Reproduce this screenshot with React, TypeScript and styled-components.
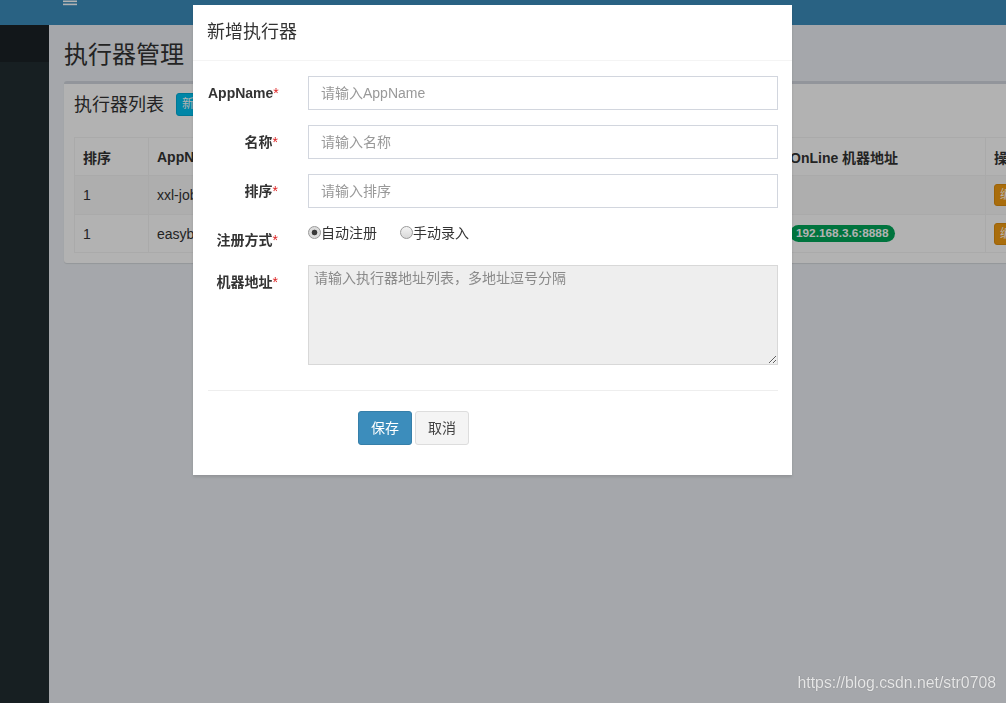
import React from "react";
import styled, { createGlobalStyle } from "styled-components";

const FONT = `"Liberation Sans", "Noto Sans CJK SC", sans-serif`;

const Global = createGlobalStyle`
  html, body { margin: 0; padding: 0; height: 100%; overflow: hidden; }
  body { font-family: ${FONT}; font-size: 14px; color: #333; background: #ecf0f5; }
  * { box-sizing: border-box; }
`;

const Page = styled.div`
  display: flex;
  width: 100%;
  height: 703px;
  overflow: hidden;
`;

const Sidebar = styled.div`
  width: 49px;
  flex: 0 0 49px;
  display: flex;
  flex-direction: column;
  background: #222d32;
`;

const SideLogo = styled.div`
  height: 25px;
  background: #3c8dbc;
`;

const SidePanel = styled.div`
  height: 37px;
  background: #1a2226;
`;

const Main = styled.div`
  flex: 1;
  min-width: 0;
  display: flex;
  flex-direction: column;
  background: #ecf0f5;
`;

const Navbar = styled.div`
  height: 25px;
  background: #3c8dbc;
  padding-left: 14px;
  display: flex;
  align-items: flex-start;
`;

const Content = styled.div`
  padding: 15px 0 0 15px;
  display: flex;
  flex-direction: column;
  gap: 11px;
`;

const PageTitle = styled.h1`
  margin: 0;
  font-size: 24px;
  line-height: 30px;
  font-weight: normal;
  color: #333;
`;

const Box = styled.div`
  width: 1060px;
  background: #fff;
  border-top: 3px solid #d2d6de;
  border-radius: 3px;
  box-shadow: 0 1px 1px rgba(0, 0, 0, 0.1);
`;

const BoxHeader = styled.div`
  height: 43px;
  padding: 9px 10px 0;
  display: flex;
  align-items: flex-start;
  gap: 12px;
`;

const BoxTitle = styled.h3`
  margin: 3px 0 0;
  font-size: 18px;
  line-height: 18px;
  font-weight: normal;
  color: #333;
`;

const InfoBtn = styled.span`
  display: inline-block;
  padding: 1px 5px;
  font-size: 12px;
  line-height: 19px;
  color: #fff;
  background: #00c0ef;
  border: 1px solid #00acd6;
  border-radius: 3px;
`;

const BoxBody = styled.div`
  padding: 10px 10px 10px;
`;

const Row = styled.div<{ $h: number; $bg: string }>`
  display: grid;
  grid-template-columns: 74px 633px 204px 120px;
  height: ${(p) => p.$h}px;
  background: ${(p) => p.$bg};
  border-top: 1px solid #f4f4f4;
  &:last-child { border-bottom: 1px solid #f4f4f4; }
`;

const Cell = styled.div<{ $head?: boolean }>`
  padding: 0 8px;
  display: flex;
  align-items: center;
  border-left: 1px solid #f4f4f4;
  font-weight: ${(p) => (p.$head ? "bold" : "normal")};
  color: #333;
  white-space: nowrap;
  overflow: hidden;
`;

const GreenLabel = styled.span`
  display: inline-block;
  background: #00a65a;
  color: #fff;
  font-weight: bold;
  font-size: 11.8px;
  line-height: 13px;
  padding: 2px 6px 2px 6px;
  border-radius: 9px;
`;

const WarnBtn = styled.span`
  display: inline-block;
  padding: 1px 5px;
  font-size: 12px;
  line-height: 18px;
  color: #fff;
  background: #f39c12;
  border: 1px solid #e08e0b;
  border-radius: 3px;
`;

const Backdrop = styled.div`
  position: fixed;
  inset: 0;
  background: rgba(0, 0, 0, 0.3);
  z-index: 10;
`;

const ModalLayer = styled.div`
  position: fixed;
  inset: 0;
  z-index: 20;
  padding: 5px 0 0 193px;
`;

const Modal = styled.div`
  width: 599px;
  background: #fff;
  box-shadow: 0 2px 3px rgba(0, 0, 0, 0.125);
`;

const ModalHeader = styled.div`
  height: 56px;
  padding: 15px 14px;
  border-bottom: 1px solid #f4f4f4;
`;

const ModalTitle = styled.h4`
  margin: 0;
  font-size: 18px;
  line-height: 25px;
  font-weight: normal;
  color: #333;
`;

const ModalBody = styled.div`
  padding: 15px 14px 15px 15px;
  display: flex;
  flex-direction: column;
`;

const FormRow = styled.div`
  display: grid;
  grid-template-columns: 85px 1fr;
  column-gap: 15px;
  margin-bottom: 15px;
`;

const Label = styled.label`
  text-align: right;
  padding: 7px 15px 0 0;
  font-weight: bold;
  font-size: 14px;
  line-height: 20px;
  color: #333;
  white-space: nowrap;
`;

const Req = styled.span`
  color: #dd2222;
  font-weight: normal;
`;

const Input = styled.input`
  display: block;
  width: 100%;
  height: 34px;
  padding: 6px 12px;
  font-family: ${FONT};
  font-size: 14px;
  line-height: 20px;
  color: #555;
  border: 1px solid #d2d6de;
  border-radius: 0;
  background: #fff;
  outline: none;
  &::placeholder { color: #999; }
`;

const RadioGroup = styled.div`
  display: flex;
  align-items: center;
  height: 20px;
  gap: 23px;
`;

const RadioLabel = styled.label`
  display: flex;
  align-items: center;
  font-size: 14px;
  line-height: 20px;
  color: #333;
`;

const Radio = styled.input`
  appearance: none;
  width: 13px;
  height: 13px;
  margin: 0;
  border: 1px solid #9a9a9a;
  border-radius: 50%;
  background: linear-gradient(#f4f4f4, #d8d8d8);
  position: relative;
  top: -1px;
  &:checked {
    background: radial-gradient(circle, #3a3a3a 0 2.5px, #dcdcdc 3.2px);
  }
`;

const TextArea = styled.textarea`
  display: block;
  width: 100%;
  height: 100px;
  padding: 2px 5px;
  font-family: ${FONT};
  font-size: 14px;
  line-height: 20px;
  background: #eee;
  border: 1px solid #d8d8d8;
  border-radius: 0;
  color: #555;
  outline: none;
  &::placeholder { color: #8a8a8a; }
`;

const Divider = styled.hr`
  width: 100%;
  margin: 10px 0 20px;
  border: 0;
  border-top: 1px solid #eee;
`;

const Actions = styled.div`
  display: flex;
  gap: 3px;
  margin: 0 0 15px 150px;
`;

const Button = styled.button<{ $primary?: boolean }>`
  height: 34px;
  padding: 6px 12px;
  font-family: ${FONT};
  font-size: 14px;
  line-height: 20px;
  border-radius: 3px;
  border: 1px solid ${(p) => (p.$primary ? "#367fa9" : "#ddd")};
  background: ${(p) => (p.$primary ? "#3c8dbc" : "#f4f4f4")};
  color: ${(p) => (p.$primary ? "#fff" : "#444")};
  cursor: pointer;
`;

const Watermark = styled.div`
  position: fixed;
  right: 10px;
  bottom: 11px;
  z-index: 30;
  font-family: "Liberation Sans", sans-serif;
  font-size: 15.8px;
  line-height: 18px;
  color: rgba(255, 255, 255, 0.82);
  text-shadow: 0 0 1px rgba(0, 0, 0, 0.35);
`;

export default function App() {
  return (
    <>
      <Global />
      <Page>
        <Sidebar>
          <SideLogo />
          <SidePanel />
        </Sidebar>
        <Main>
          <Navbar>
            <svg width="14" height="6" viewBox="0 0 14 6">
              <rect x="0" y="0.5" width="14" height="1.6" fill="#ffffff" />
              <rect x="0" y="3.6" width="14" height="1.6" fill="#ffffff" />
            </svg>
          </Navbar>
          <Content>
            <PageTitle>执行器管理</PageTitle>
            <Box>
              <BoxHeader>
                <BoxTitle>执行器列表</BoxTitle>
                <InfoBtn>新增</InfoBtn>
              </BoxHeader>
              <BoxBody>
                <Row $h={38} $bg="#fff">
                  <Cell $head>排序</Cell>
                  <Cell $head>AppName</Cell>
                  <Cell $head>OnLine 机器地址</Cell>
                  <Cell $head>操作</Cell>
                </Row>
                <Row $h={39} $bg="#f9f9f9">
                  <Cell>1</Cell>
                  <Cell>xxl-job-executor-sample</Cell>
                  <Cell></Cell>
                  <Cell>
                    <WarnBtn>编辑</WarnBtn>
                  </Cell>
                </Row>
                <Row $h={39} $bg="#fff">
                  <Cell>1</Cell>
                  <Cell>easyboot-executor</Cell>
                  <Cell>
                    <GreenLabel>192.168.3.6:8888</GreenLabel>
                  </Cell>
                  <Cell>
                    <WarnBtn>编辑</WarnBtn>
                  </Cell>
                </Row>
              </BoxBody>
            </Box>
          </Content>
        </Main>
      </Page>
      <Backdrop />
      <ModalLayer>
        <Modal>
          <ModalHeader>
            <ModalTitle>新增执行器</ModalTitle>
          </ModalHeader>
          <ModalBody>
            <FormRow>
              <Label>
                AppName<Req>*</Req>
              </Label>
              <Input placeholder="请输入AppName" />
            </FormRow>
            <FormRow>
              <Label>
                名称<Req>*</Req>
              </Label>
              <Input placeholder="请输入名称" />
            </FormRow>
            <FormRow>
              <Label>
                排序<Req>*</Req>
              </Label>
              <Input placeholder="请输入排序" />
            </FormRow>
            <FormRow>
              <Label>
                注册方式<Req>*</Req>
              </Label>
              <RadioGroup>
                <RadioLabel>
                  <Radio type="radio" name="addressType" defaultChecked />
                  自动注册
                </RadioLabel>
                <RadioLabel>
                  <Radio type="radio" name="addressType" />
                  手动录入
                </RadioLabel>
              </RadioGroup>
            </FormRow>
            <FormRow>
              <Label>
                机器地址<Req>*</Req>
              </Label>
              <TextArea readOnly placeholder="请输入执行器地址列表，多地址逗号分隔" />
            </FormRow>
            <Divider />
            <Actions>
              <Button $primary>保存</Button>
              <Button>取消</Button>
            </Actions>
          </ModalBody>
        </Modal>
      </ModalLayer>
      <Watermark>https://blog.csdn.net/str0708</Watermark>
    </>
  );
}
